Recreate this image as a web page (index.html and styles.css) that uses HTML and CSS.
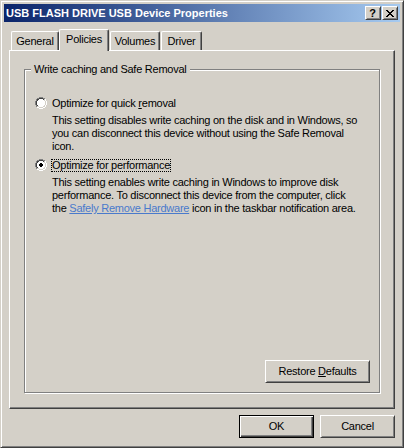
FILE: index.html
```html
<!DOCTYPE html>
<html>
<head>
<meta charset="utf-8">
<link rel="stylesheet" href="styles.css">
</head>
<body>
<div class="window">
  <div class="titlebar">
    <span class="title">USB FLASH DRIVE USB Device Properties</span>
    <div class="capbtns">
      <span class="btn cap help">?</span>
      <span class="btn cap close">
        <svg width="8" height="7" viewBox="0 0 8 7" shape-rendering="crispEdges">
          <g fill="#000">
            <rect x="0" y="0" width="2" height="1"/><rect x="6" y="0" width="2" height="1"/>
            <rect x="1" y="1" width="2" height="1"/><rect x="5" y="1" width="2" height="1"/>
            <rect x="2" y="2" width="4" height="1"/>
            <rect x="3" y="3" width="2" height="1"/>
            <rect x="2" y="4" width="4" height="1"/>
            <rect x="1" y="5" width="2" height="1"/><rect x="5" y="5" width="2" height="1"/>
            <rect x="0" y="6" width="2" height="1"/><rect x="6" y="6" width="2" height="1"/>
          </g>
        </svg>
      </span>
    </div>
  </div>
  <div class="client">
    <div class="tabs">
      <div class="tab t-general">General</div>
      <div class="tab selected t-policies">Policies</div>
      <div class="tab t-volumes">Volumes</div>
      <div class="tab t-driver">Driver</div>
    </div>
    <div class="panel">
      <div class="group">
        <span class="legend">Write caching and Safe Removal</span>
        <div class="opt">
          <svg class="radio" width="12" height="12" viewBox="0 0 12 12" shape-rendering="crispEdges">
            <g fill="#808080"><rect x="4" y="0" width="4" height="1"/><rect x="2" y="1" width="2" height="1"/><rect x="8" y="1" width="2" height="1"/><rect x="1" y="2" width="1" height="2"/><rect x="0" y="4" width="1" height="4"/><rect x="1" y="8" width="1" height="2"/></g>
            <g fill="#fff"><rect x="10" y="2" width="1" height="2"/><rect x="11" y="4" width="1" height="4"/><rect x="10" y="8" width="1" height="2"/><rect x="2" y="10" width="2" height="1"/><rect x="8" y="10" width="2" height="1"/><rect x="4" y="11" width="4" height="1"/></g>
            <g fill="#404040"><rect x="4" y="1" width="4" height="1"/><rect x="2" y="2" width="2" height="1"/><rect x="8" y="2" width="1" height="1"/><rect x="2" y="3" width="1" height="1"/><rect x="1" y="4" width="1" height="4"/><rect x="2" y="8" width="1" height="1"/></g>
            <g fill="#fff"><rect x="4" y="2" width="4" height="1"/><rect x="3" y="3" width="6" height="1"/><rect x="2" y="4" width="8" height="4"/><rect x="3" y="8" width="6" height="1"/><rect x="4" y="9" width="4" height="1"/></g>
          </svg>
          <span class="label">Optimize for quick <u>r</u>emoval</span>
        </div>
        <div class="desc">This setting disables write caching on the disk and in Windows, so<br>you can disconnect this device without using the Safe Removal<br>icon.</div>
        <div class="opt opt2">
          <svg class="radio" width="12" height="12" viewBox="0 0 12 12" shape-rendering="crispEdges">
            <g fill="#808080"><rect x="4" y="0" width="4" height="1"/><rect x="2" y="1" width="2" height="1"/><rect x="8" y="1" width="2" height="1"/><rect x="1" y="2" width="1" height="2"/><rect x="0" y="4" width="1" height="4"/><rect x="1" y="8" width="1" height="2"/></g>
            <g fill="#fff"><rect x="10" y="2" width="1" height="2"/><rect x="11" y="4" width="1" height="4"/><rect x="10" y="8" width="1" height="2"/><rect x="2" y="10" width="2" height="1"/><rect x="8" y="10" width="2" height="1"/><rect x="4" y="11" width="4" height="1"/></g>
            <g fill="#404040"><rect x="4" y="1" width="4" height="1"/><rect x="2" y="2" width="2" height="1"/><rect x="8" y="2" width="1" height="1"/><rect x="2" y="3" width="1" height="1"/><rect x="1" y="4" width="1" height="4"/><rect x="2" y="8" width="1" height="1"/></g>
            <g fill="#fff"><rect x="4" y="2" width="4" height="1"/><rect x="3" y="3" width="6" height="1"/><rect x="2" y="4" width="8" height="4"/><rect x="3" y="8" width="6" height="1"/><rect x="4" y="9" width="4" height="1"/></g>
            <g fill="#000"><rect x="5" y="4" width="2" height="1"/><rect x="4" y="5" width="4" height="2"/><rect x="5" y="7" width="2" height="1"/></g>
          </svg>
          <span class="label focus">Optimize for performance</span>
        </div>
        <div class="desc">This setting enables write caching in Windows to improve disk<br>performance. To disconnect this device from the computer, click<br>the <span class="link">Safely Remove Hardware</span> icon in the taskbar notification area.</div>
        <span class="btn restore"><span>Restore <u>D</u>efaults</span></span>
      </div>
    </div>
    <div class="footer">
      <span class="btn default">OK</span>
      <span class="btn">Cancel</span>
    </div>
  </div>
</div>
</body>
</html>
```
FILE: styles.css
```css
html, body {
  margin: 0;
  padding: 0;
  background: #d4d0c8;
}
body {
  font-family: "Liberation Sans", Arial, sans-serif;
  font-size: 11px;
  line-height: 13px;
  letter-spacing: -0.25px;
  color: #000;
}
.window {
  width: 404px;
  height: 448px;
  box-sizing: border-box;
  border: 1px solid;
  border-color: #d4d0c8 #404040 #404040 #d4d0c8;
  box-shadow: inset 1px 1px #fff, inset -1px -1px #808080;
  padding: 3px;
  display: flex;
  flex-direction: column;
  background: #d4d0c8;
}
.titlebar {
  height: 18px;
  flex: none;
  display: flex;
  align-items: center;
  padding: 0 2px;
  background: linear-gradient(to right, #0a246a, #a6caf0);
}
.title {
  flex: 1;
  color: #fff;
  font-weight: bold;
  letter-spacing: 0;
  white-space: nowrap;
  padding-top: 1px;
}
.capbtns {
  display: flex;
  gap: 1px;
}
.btn {
  display: flex;
  align-items: center;
  justify-content: center;
  box-sizing: border-box;
  width: 75px;
  height: 23px;
  background: #d4d0c8;
  border: 1px solid;
  border-color: #fff #404040 #404040 #fff;
  box-shadow: inset 1px 1px #d4d0c8, inset -1px -1px #808080;
  white-space: nowrap;
}
.btn.cap {
  width: 16px;
  height: 14px;
  font-weight: bold;
  font-size: 11px;
  line-height: 12px;
  letter-spacing: 0;
}
.btn.help {
  padding-right: 1px;
}
.btn.close svg {
  display: block;
  margin-left: -1px;
}
.btn.default {
  border-color: #000;
  box-shadow: inset 1px 1px #fff, inset -1px -1px #404040, inset -2px -2px #808080;
}
.client {
  flex: 1;
  display: flex;
  flex-direction: column;
  padding: 7px 5px 0;
}
.tabs {
  display: flex;
  align-items: flex-end;
  height: 21px;
  padding-left: 2px;
}
.tab {
  box-sizing: border-box;
  height: 19px;
  display: flex;
  align-items: center;
  justify-content: center;
  border-left: 1px solid #fff;
  border-top: 1px solid #fff;
  border-right: 1px solid #404040;
  border-top-left-radius: 2px;
  border-top-right-radius: 2px;
  box-shadow: inset -1px 0 #808080;
  padding-top: 1px;
}
.tab.selected {
  position: relative;
  z-index: 1;
  height: 22px;
  margin-bottom: -1px;
  background: #d4d0c8;
  padding: 0 0 3px;
}
.t-general { width: 48px; }
.t-policies { width: 50px; }
.t-volumes { width: 50px; margin-left: 1px; }
.t-driver { width: 41px; margin-left: 1px; }
.panel {
  height: 359px;
  flex: none;
  box-sizing: border-box;
  border: 1px solid;
  border-color: #fff #404040 #404040 #fff;
  box-shadow: inset -1px -1px #808080;
  padding: 18px 14px 0;
}
.group {
  position: relative;
  height: 324px;
  box-sizing: border-box;
  border: 1px solid #808080;
  box-shadow: inset 1px 1px #fff, 1px 1px #fff;
  padding: 27px 9px 9px 10px;
  display: flex;
  flex-direction: column;
}
.legend {
  position: absolute;
  left: 6px;
  top: -7px;
  padding: 0 3px;
  background: #d4d0c8;
  white-space: nowrap;
}
.opt {
  display: flex;
  align-items: flex-start;
  gap: 4px;
  height: 13px;
}
.radio {
  display: block;
  flex: none;
}
.label {
  padding: 0 1px;
  white-space: nowrap;
}
.label.focus {
  outline: 1px dotted #000;
  outline-offset: -1px;
}
.opt2 {
  margin-top: 6px;
}
.desc {
  margin: 4px 0 0 17px;
  white-space: nowrap;
}
.link {
  color: #4a7acc;
  text-decoration: underline;
}
.btn.restore {
  width: 105px;
  margin-top: auto;
  align-self: flex-end;
}
.footer {
  display: flex;
  justify-content: flex-end;
  gap: 6px;
  margin-top: 6px;
}
```
